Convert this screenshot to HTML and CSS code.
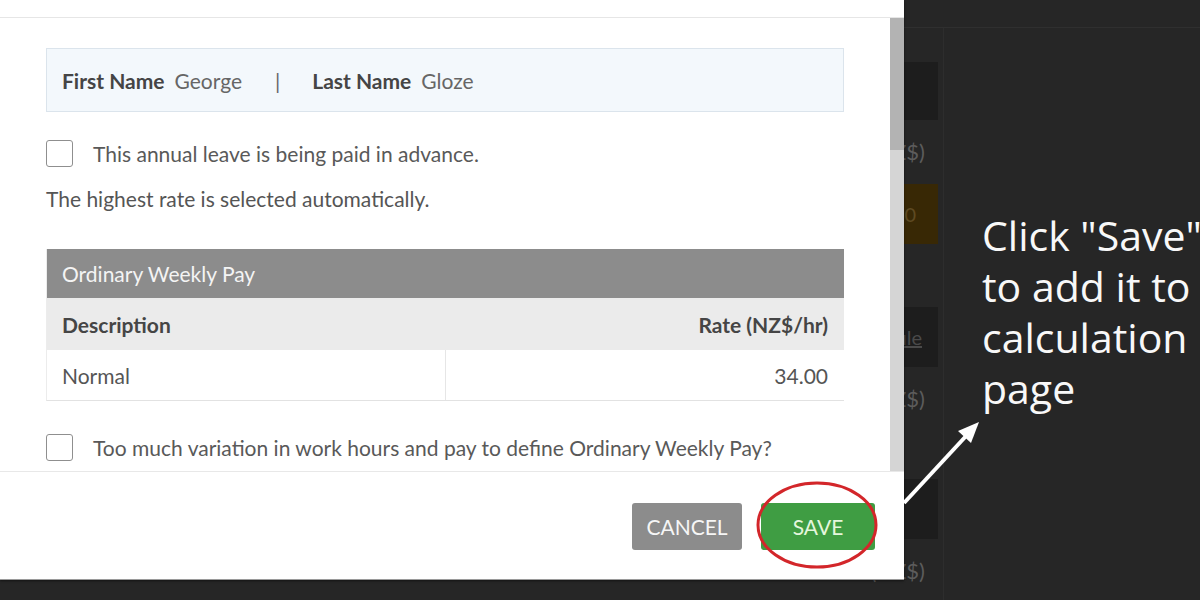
FILE: index.html
```html
<!DOCTYPE html>
<html lang="en">
<head>
<meta charset="utf-8">
<title>Annual leave</title>
<link rel="stylesheet" href="styles.css">
</head>
<body>
<div class="backdrop">
  <div class="bg-header"></div>
  <div class="bg-body">
    <div class="bg-col">
      <div class="bg-box bg-b1"></div>
      <div class="bg-text bg-t1">(NZ$)</div>
      <div class="bg-box bg-orange"><span class="bg-num">0</span></div>
      <div class="bg-box bg-b2"><span class="bg-link">Rule</span></div>
      <div class="bg-text bg-t2">(NZ$)</div>
      <div class="bg-box bg-b3"></div>
      <div class="bg-text bg-t3">(NZ$)</div>
    </div>
    <div class="bg-divider"></div>
  </div>
</div>

<div class="modal">
  <div class="modal-top"></div>
  <div class="modal-body">
    <div class="content">
      <div class="name-box">
        <span class="label">First Name</span><span class="value">George</span>
        <span class="sep">|</span>
        <span class="label">Last Name</span><span class="value">Gloze</span>
      </div>
      <label class="check-row check-first">
        <span class="box"></span>
        <span class="check-text">This annual leave is being paid in advance.</span>
      </label>
      <p class="note">The highest rate is selected automatically.</p>
      <div class="rate-table">
        <div class="rt-title">Ordinary Weekly Pay</div>
        <div class="rt-head">
          <div class="rt-cell">Description</div>
          <div class="rt-cell rt-right">Rate (NZ$/hr)</div>
        </div>
        <div class="rt-row">
          <div class="rt-cell rt-divide">Normal</div>
          <div class="rt-cell rt-right">34.00</div>
        </div>
      </div>
      <label class="check-row check-second">
        <span class="box"></span>
        <span class="check-text">Too much variation in work hours and pay to define Ordinary Weekly Pay?</span>
      </label>
    </div>
    <div class="scrollbar"><div class="thumb"></div></div>
  </div>
  <div class="modal-footer">
    <button class="btn btn-cancel">CANCEL</button>
    <button class="btn btn-save">SAVE</button>
  </div>
</div>

<div class="annotation">
  <div class="ann-line">Click "Save"</div>
  <div class="ann-line">to add it to</div>
  <div class="ann-line">calculation</div>
  <div class="ann-line">page</div>
</div>

<svg class="marks" width="1200" height="600" viewBox="0 0 1200 600">
  <ellipse cx="817" cy="525" rx="59" ry="42" fill="none" stroke="#d3262a" stroke-width="3"/>
  <line x1="904" y1="503" x2="967" y2="435" stroke="#ffffff" stroke-width="4"/>
  <polygon points="979,422 971,443 958,431" fill="#ffffff"/>
</svg>
</body>
</html>
```

FILE: styles.css
```css
* { box-sizing: border-box; }
html, body {
  margin: 0;
  padding: 0;
  width: 1200px;
  height: 600px;
  overflow: hidden;
  background: #262626;
  font-family: Lato, "Open Sans", sans-serif;
}

/* background page behind overlay */
.backdrop {
  width: 1200px;
  height: 600px;
  display: flex;
  flex-direction: column;
}
.bg-header {
  height: 28px;
  border-bottom: 1px solid #2f2f2f;
}
.bg-body {
  flex: 1;
  display: flex;
}
.bg-col {
  width: 938px;
  display: flex;
  flex-direction: column;
  align-items: flex-end;
}
.bg-divider {
  width: 1px;
  background: #2d2d2d;
  margin-left: 5px;
}
.bg-box {
  width: 220px;
  height: 58px;
  background: #1d1d1d;
  display: flex;
  align-items: center;
  justify-content: flex-end;
  padding-right: 16px;
}
.bg-b1 { margin-top: 34px; }
.bg-orange { margin-top: 20px; background: #382805; height: 60px; padding-right: 22px; }
.bg-b2 { margin-top: 63px; height: 60px; }
.bg-b3 { margin-top: 68px; height: 60px; }
.bg-text {
  color: #5c5c5c;
  font-size: 22px;
  padding-right: 13px;
  line-height: 24px;
}
.bg-t1 { margin-top: 20px; }
.bg-t2 { margin-top: 20px; }
.bg-t3 { margin-top: 20px; }
.bg-num { color: #5e4a22; font-size: 20px; }
.bg-link { color: #4a4a4a; font-size: 20px; text-decoration: underline; }

/* modal */
.modal {
  position: absolute;
  left: 0;
  top: 0;
  width: 904px;
  height: 580px;
  background: #ffffff;
  display: flex;
  flex-direction: column;
  box-shadow: 0 1px 2px rgba(0,0,0,0.5);
  border-bottom: 1px solid #9a9a9a;
}
.modal-top {
  height: 18px;
  border-bottom: 1px solid #e6e6e6;
}
.modal-body {
  height: 453px;
  display: flex;
  overflow: hidden;
}
.content {
  flex: 1;
  padding: 30px 46px 0 46px;
  color: #555;
}
.scrollbar {
  width: 14px;
  background: #d5d5d5;
  display: flex;
  flex-direction: column;
}
.thumb {
  height: 132px;
  background: #b3b3b3;
}

.name-box {
  width: 798px;
  height: 64px;
  background: #f3f8fc;
  border: 1px solid #dbe4ec;
  display: flex;
  align-items: center;
  padding-left: 15px;
  font-size: 21px;
}
.label {
  font-weight: 700;
  color: #454545;
  margin-right: 10px;
}
.value {
  color: #666;
}
.sep {
  color: #666;
  margin: 0 32px 0 33px;
}

.check-row {
  display: flex;
  align-items: center;
  height: 27px;
}
.check-first { margin-top: 28px; }
.check-second { margin-top: 33px; }
.box {
  width: 27px;
  height: 27px;
  border: 1.5px solid #8f8f8f;
  border-radius: 3px;
  background: #fff;
  flex: none;
}
.check-text {
  margin-left: 20px;
  font-size: 21px;
  color: #595959;
}

.note {
  margin: 20px 0 0 0;
  font-size: 21px;
  line-height: 24px;
  color: #555;
}

.rate-table {
  width: 798px;
  margin-top: 38px;
  border-left: 1px solid #ececec;
  border-bottom: 1px solid #e2e2e2;
  font-size: 21px;
}
.rt-title {
  height: 49px;
  background: #8c8c8c;
  color: #f4f4f4;
  display: flex;
  align-items: center;
  padding-left: 15px;
}
.rt-head, .rt-row {
  display: grid;
  grid-template-columns: 399px 1fr;
}
.rt-head {
  height: 52px;
  background: #ebebeb;
  font-weight: 700;
  color: #454545;
}
.rt-row {
  height: 50px;
  background: #fff;
  color: #555;
}
.rt-cell {
  display: flex;
  align-items: center;
  padding: 0 16px 0 15px;
}
.rt-right { justify-content: flex-end; }
.rt-divide { border-right: 1px solid #e6e6e6; }

.modal-footer {
  flex: 1;
  border-top: 1px solid #e8e8e8;
  display: flex;
  justify-content: flex-end;
  align-items: flex-start;
  padding: 31px 29px 0 0;
  gap: 19px;
}
.btn {
  height: 47px;
  border: none;
  border-radius: 3px;
  font-family: Lato, sans-serif;
  font-size: 21px;
  padding: 0;
}
.btn-cancel {
  width: 110px;
  background: #8c8c8c;
  color: #f6f6f6;
}
.btn-save {
  width: 114px;
  background: #3f9d43;
  color: #e4f6dc;
}

.annotation {
  position: absolute;
  left: 982px;
  top: 210px;
  font-family: "Open Sans", sans-serif;
  font-size: 41px;
  color: #f8f8f8;
  white-space: nowrap;
  display: flex;
  flex-direction: column;
}
.ann-line {
  height: 51px;
  line-height: 51px;
}
.marks {
  position: absolute;
  left: 0;
  top: 0;
  pointer-events: none;
}
```
